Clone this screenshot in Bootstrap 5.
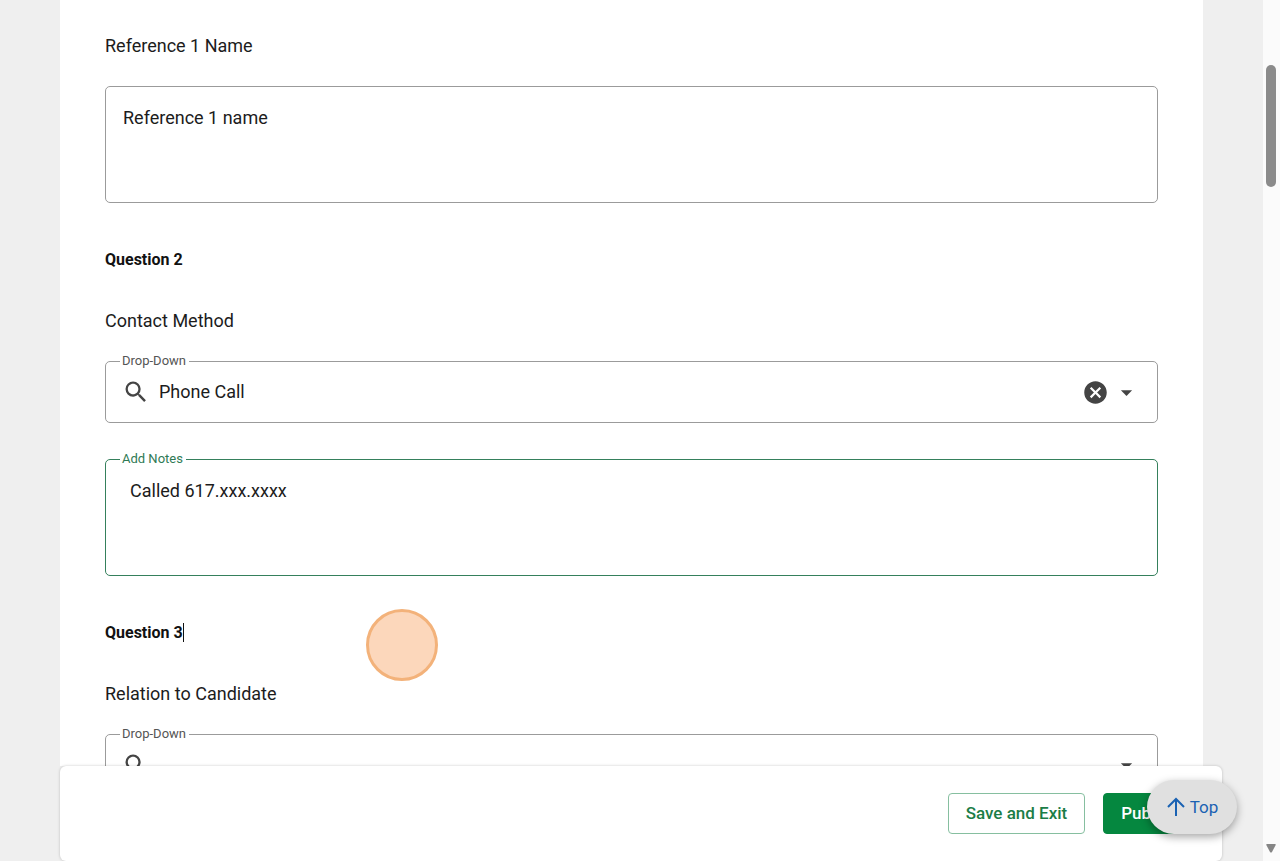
<!DOCTYPE html>
<html lang="en">
<head>
<meta charset="utf-8">
<meta name="viewport" content="width=device-width, initial-scale=1">
<title>Reference check</title>
<link href="https://cdn.jsdelivr.net/npm/bootstrap@5.3.0/dist/css/bootstrap.min.css" rel="stylesheet">
<style>
  body { font-family: Roboto, "Liberation Sans", sans-serif; font-size: 18px; line-height: 28px; color: #1c1c1c; background: #efefef; }
  .form-panel { margin: 0 60px; padding: 32px 45px 0; }
  .prompt { display: block; margin-bottom: 26px; }
  .question-title { font-size: 16px; line-height: 24px; font-weight: 700; color: #111; margin: 45px 0 35px; }
  .text-caret { border-right: 1px solid #111; }
  .outlined { border: 1px solid #9b9b9b; border-radius: 5px; }
  .outlined.is-active { border-color: #35805c; }
  .outlined.is-active .float-tag { color: #2f7a55; }
  .float-tag { top: -11px; left: 14px; padding: 0 3px 0 2px; font-size: 13px; line-height: 20px; color: #555; background: #fff; }
  .answer { display: block; width: 100%; height: 115px; padding: 17px; border: 0; resize: none; outline: 0; background: transparent; color: inherit; }
  .answer-notes { padding-left: 24px; }
  .picker { height: 62px; padding: 0 17px 0 16px; color: #444; }
  .picker select { appearance: none; border: 0; outline: 0; background: transparent; color: #1c1c1c; margin-left: 9px; }
  .notes-box { margin-top: 36px; }
  .action-bar { height: 95px; margin: 0 41px 0 60px; padding-right: 26px; gap: 18px; border-radius: 6px; box-shadow: 0 0 3px rgba(0,0,0,.22); }
  .action-bar .btn { height: 41px; padding: 6px 17px 8px; font-size: 17px; line-height: 24px; font-weight: 500; border-radius: 4px; }
  .btn-save { --bs-btn-color: #1b7d47; --bs-btn-border-color: #86bfa0; --bs-btn-bg: #fff; }
  .btn-publish { --bs-btn-color: #fff; --bs-btn-bg: #05873f; --bs-btn-border-color: #05873f; }
  .top-link { right: 26px; bottom: 27px; width: 90px; height: 54px; border-radius: 27px; background: #e0e0e0; color: #1a62b3; box-shadow: 0 3px 8px rgba(0,0,0,.35); font-size: 17px; }
  .click-mark { left: 366px; top: 609px; width: 72px; height: 72px; border: 3px solid #f3b27a; background: #fcd7bb; }
  .scroll-track { width: 17px; padding: 65px 4px 8px 3px; background: #fbfbfb; }
  .scroll-thumb { height: 122px; border-radius: 5px; background: #8b8b8b; }
</style>
</head>
<body>
<div class="d-flex vh-100 overflow-hidden">
  <div class="d-flex flex-column flex-grow-1 position-relative">
    <main class="flex-grow-1 overflow-hidden">
      <form class="form-panel bg-white">
        <label class="prompt" for="ref-name">Reference 1 Name</label>
        <div class="outlined"><textarea class="answer" id="ref-name">Reference 1 name</textarea></div>

        <h2 class="question-title">Question 2</h2>
        <label class="prompt" for="contact">Contact Method</label>
        <div class="outlined picker d-flex align-items-center position-relative">
          <label class="float-tag position-absolute" for="contact">Drop-Down</label>
          <svg width="28" height="28" viewBox="0 0 24 24" fill="currentColor" aria-hidden="true"><path d="M15.5 14h-.79l-.28-.27A6.47 6.47 0 0 0 16 9.5 6.5 6.5 0 1 0 9.5 16c1.61 0 3.09-.59 4.23-1.57l.27.28v.79l5 4.99L20.49 19l-4.99-5zm-6 0C7.01 14 5 11.99 5 9.5S7.01 5 9.5 5 14 7.01 14 9.5 11.99 14 9.5 14z"/></svg>
          <select class="flex-grow-1" id="contact"><option>Phone Call</option></select>
          <button type="button" class="btn p-0 border-0 d-flex" aria-label="Clear"><svg width="27" height="27" viewBox="0 0 24 24" fill="#444"><path d="M12 2C6.47 2 2 6.47 2 12s4.47 10 10 10 10-4.47 10-10S17.53 2 12 2zm5 13.59L15.59 17 12 13.41 8.41 17 7 15.59 10.59 12 7 8.41 8.41 7 12 10.59 15.59 7 17 8.41 13.41 12 17 15.59z"/></svg></button>
          <svg class="ms-1" width="27" height="27" viewBox="0 0 24 24" fill="currentColor" aria-hidden="true"><path d="M7 10l5 5 5-5z"/></svg>
        </div>

        <div class="outlined is-active notes-box position-relative">
          <label class="float-tag position-absolute" for="notes">Add Notes</label>
          <textarea class="answer answer-notes" id="notes">Called 617.xxx.xxxx</textarea>
        </div>

        <h2 class="question-title"><span class="text-caret">Question 3</span></h2>
        <label class="prompt" for="relation">Relation to Candidate</label>
        <div class="outlined picker d-flex align-items-center position-relative">
          <label class="float-tag position-absolute" for="relation">Drop-Down</label>
          <svg width="28" height="28" viewBox="0 0 24 24" fill="currentColor" aria-hidden="true"><path d="M15.5 14h-.79l-.28-.27A6.47 6.47 0 0 0 16 9.5 6.5 6.5 0 1 0 9.5 16c1.61 0 3.09-.59 4.23-1.57l.27.28v.79l5 4.99L20.49 19l-4.99-5zm-6 0C7.01 14 5 11.99 5 9.5S7.01 5 9.5 5 14 7.01 14 9.5 11.99 14 9.5 14z"/></svg>
          <select class="flex-grow-1" id="relation"><option></option></select>
          <svg width="27" height="27" viewBox="0 0 24 24" fill="currentColor" aria-hidden="true"><path d="M7 10l5 5 5-5z"/></svg>
        </div>
      </form>
    </main>
    <footer class="action-bar bg-white d-flex flex-shrink-0 align-items-center justify-content-end position-relative">
      <button type="button" class="btn btn-save">Save and Exit</button>
      <button type="button" class="btn btn-publish">Publish</button>
    </footer>
    <a href="#ref-name" class="top-link position-absolute d-flex align-items-center justify-content-center text-decoration-none"><svg class="me-1" width="20" height="20" viewBox="0 0 20 20" fill="none" stroke="currentColor" stroke-width="2" aria-hidden="true"><path d="M10 19V2M2 10l8-8 8 8"/></svg>Top</a>
    <div class="click-mark position-absolute rounded-circle"></div>
  </div>
  <div class="scroll-track d-flex flex-column justify-content-between flex-shrink-0" aria-hidden="true">
    <div class="scroll-thumb"></div>
    <svg width="10" height="9" viewBox="0 0 10 9" fill="#858585"><path d="M1 0h8q1 0 .7 1L6 8Q5 9 4 8L.3 1Q0 0 1 0z"/></svg>
  </div>
</div>
<script src="https://cdn.jsdelivr.net/npm/bootstrap@5.3.0/dist/js/bootstrap.bundle.min.js"></script>
</body>
</html>
